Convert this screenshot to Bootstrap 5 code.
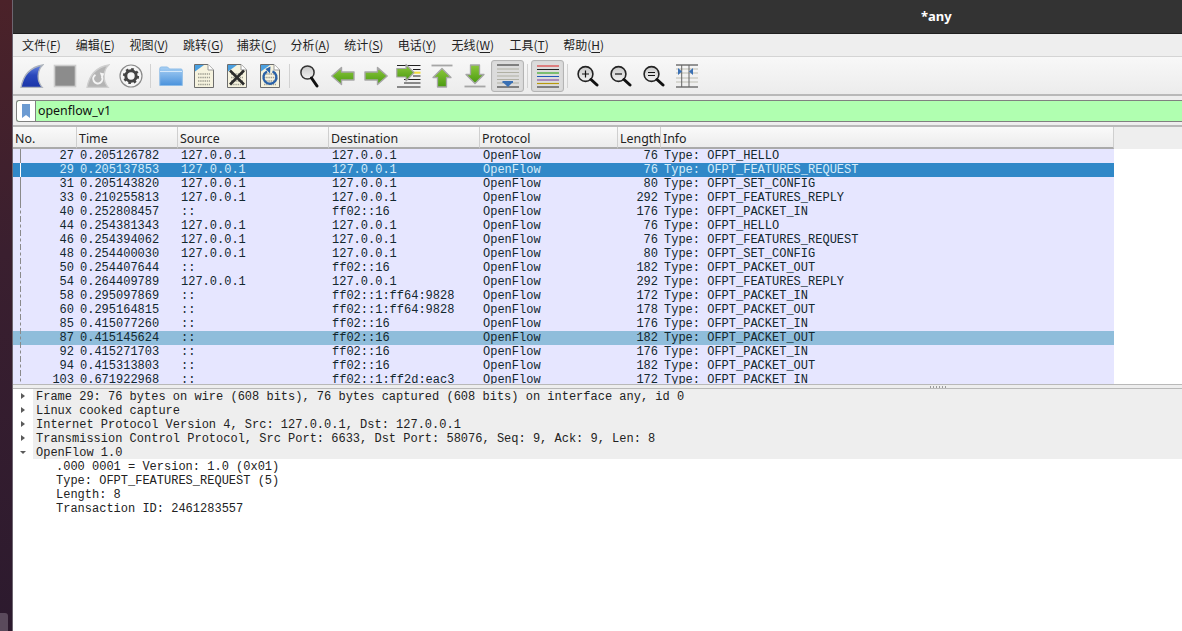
<!DOCTYPE html>
<html lang="zh">
<head>
<meta charset="utf-8">
<title>*any</title>
<link rel="stylesheet" href="https://cdn.jsdelivr.net/npm/bootstrap@5.3.0/dist/css/bootstrap.min.css">
<style>
html,body{height:631px;overflow:hidden}
body{background:#fff;color:#222;font-family:"Noto Sans","Noto Sans CJK SC",sans-serif;font-size:12.4px;line-height:14px}
.dock{width:13px;background:linear-gradient(180deg,#4b2229 0%,#3a1f2f 40%,#2c1a2e 100%);border-right:1px solid #6d6570;flex:none}
.dock-tile{height:18px;width:8px;background:#5a4a5c;border-radius:0 3px 0 0}
.wintitle{height:34px;background:#333;border-bottom:1px solid #1f1f1f;color:#fff;font-weight:700;font-size:13px;font-family:"Noto Sans",sans-serif;padding-left:908px;padding-bottom:2px;flex:none}
.menubar{height:23px;background:#eee;border-bottom:1px solid #d4d4d4;padding-left:9px;flex:none;color:#222;font-family:"Noto Sans CJK SC",sans-serif;font-size:12px}
.menubar span.mi{width:53.7px;flex:none;white-space:nowrap}
.menubar span.mi.wide{width:58px}
.toolbar{height:39px;background:linear-gradient(180deg,#f8f8f8,#ececec);border-bottom:2px solid #b9b9b9;padding-left:2px;flex:none}
.tb{width:33px;height:32px;flex:none;border-radius:3px;border:1px solid transparent}
.tb.on{background:#dcdcdc;border-color:#b4b4b4;box-shadow:inset 0 0 2px #ccc}
.tsep{width:7px;height:24px;flex:none;position:relative}
.tsep::after{content:"";display:block;width:1px;height:24px;margin-left:3px;background:#d2d2d2}
.filterwrap{height:29px;background:#eee;padding:4px 0 3px 3px;flex:none}
.filterbox{height:22px;border:1px solid #808080;border-right:0;border-radius:3px 0 0 3px;background:#b0ffb0;color:#111}
.bmk{width:19px;background:#fff;border-right:1px solid #808080;border-radius:3px 0 0 3px}
.filtertxt{padding-left:2px}
.split1{height:2px;background:#b9b9b9;flex:none}
.plist{height:257px;flex:none;overflow:hidden;position:relative}
.phead{height:22px;background:#eee}
.pcols{width:1101px;flex:none}
.hc{background:linear-gradient(180deg,#fafafa,#ececec);border-bottom:2px solid #aaa;border-right:1px solid #cfcfcf;height:22px;padding:5px 0 0 2px;flex:none;white-space:nowrap;overflow:hidden;color:#222}
.c1{width:64px}.c2{width:101px}.c3{width:151px}.c4{width:151px}.c5{width:138px}.c6{width:43px}.c7{width:453px}
.prow{height:14px;background:#e6e6ff;color:#12272e;font-family:"Liberation Mono",monospace;font-size:12px;line-height:14px;width:1101px}
.prow>div{flex:none;white-space:pre;overflow:hidden;padding-left:3px}
.prow>.c1,.prow>.c6{text-align:right;padding:0 3px 0 0;position:relative}
.prow>.c1::before{content:"";position:absolute;left:7px;top:0;bottom:0;border-left:1px dashed #8a8a8a}
.prow.conv>.c1::before{border-left-style:solid}
.prow.sel>.c1::before{border-left:1px solid #fff}
.prow.sel{background:#3088c8;color:#d6ecf9}
.prow.rel{background:#8fbddb}
.split2{height:5px;background:#eee;border-top:1px solid #b9b9b9;border-bottom:1px solid #b9b9b9;flex:none;position:relative}
.grip{position:absolute;left:916px;top:1px;width:18px;height:2px;background-image:radial-gradient(#9a9a9a 45%,transparent 50%);background-size:3px 2px}
.tree{font-family:"Liberation Mono",monospace;font-size:12px;line-height:16px;color:#222;flex:1 1 auto}
.trow{height:14px;white-space:pre}
.tgl{width:20px;flex:none}
.ttxt{flex:1 1 auto;background:#eee;padding-left:3px}
.kid{padding-left:43px}
.tri-r{width:0;height:0;border-left:4px solid #5a5a5a;border-top:3.5px solid transparent;border-bottom:3.5px solid transparent;margin-left:8px;margin-top:4px}
.tri-d{width:0;height:0;border-top:3px solid #5a5a5a;border-left:3.5px solid transparent;border-right:3.5px solid transparent;margin-left:7px;margin-top:6px}
.hidesvg{position:absolute;width:0;height:0;overflow:hidden}
u{text-underline-offset:2px}
</style>
</head>
<body class="m-0">
<svg class="hidesvg" aria-hidden="true"><defs>
<linearGradient id="gfin" x1="0" y1="0" x2="0" y2="1"><stop offset="0" stop-color="#6c88e0"/><stop offset=".45" stop-color="#2a48bc"/><stop offset="1" stop-color="#1a34a8"/></linearGradient>
<linearGradient id="gfold" x1="0" y1="0" x2="0" y2="1"><stop offset="0" stop-color="#a8d0f4"/><stop offset="1" stop-color="#4a92dc"/></linearGradient>
<linearGradient id="garr" x1="0" y1="0" x2="0" y2="1"><stop offset="0" stop-color="#8cc83c"/><stop offset="1" stop-color="#4a9a10"/></linearGradient>
<linearGradient id="glens" x1="0" y1="0" x2="0" y2="1"><stop offset="0" stop-color="#c8c8c8"/><stop offset="1" stop-color="#f2f2f2"/></linearGradient>
<g id="doc"><path d="M2.5 1.5H16L21.5 7V24.5H2.5Z" fill="#f6f3df" stroke="#6c6c6c"/><path d="M3 2H12L3 8.5Z" fill="#4ba0e0"/><path d="M16 1.5V7H21.5" fill="#fff" stroke="#9a9a9a"/><g stroke="#9e9e92" stroke-width="1.4" stroke-dasharray="1.4 .8" fill="none"><path d="M6 11H18M6 14.5H18M6 18H18M6 21.5H18"/></g></g>
<g id="mag"><circle cx="8.5" cy="9" r="7.4" fill="url(#glens)" stroke="#222" stroke-width="1.6"/><path d="M14 14.5L20 20" stroke="#111" stroke-width="3" stroke-linecap="round"/></g>
<g id="arr"><path d="M.8 12L10.5 3.5V8H23V16H10.5V20.5Z" fill="url(#garr)" stroke="#a6a6a6" stroke-width="1.4" stroke-linejoin="round"/></g>
</defs></svg>
<div class="d-flex" style="height:631px">
<div class="dock d-flex flex-column justify-content-end"><div class="dock-tile"></div></div>
<div class="d-flex flex-column flex-grow-1" style="min-width:0">
<div class="wintitle d-flex align-items-center">*any</div>
<div class="menubar d-flex align-items-center">
<span class="mi">文件(<u>F</u>)</span><span class="mi">编辑(<u>E</u>)</span><span class="mi">视图(<u>V</u>)</span><span class="mi">跳转(<u>G</u>)</span><span class="mi">捕获(<u>C</u>)</span><span class="mi">分析(<u>A</u>)</span><span class="mi">统计(<u>S</u>)</span><span class="mi">电话(<u>Y</u>)</span><span class="mi wide">无线(<u>W</u>)</span><span class="mi">工具(<u>T</u>)</span><span class="mi">帮助(<u>H</u>)</span>
</div>
<div class="toolbar d-flex align-items-center">
<div class="tb d-flex align-items-center justify-content-center"><svg width="24" height="24" viewBox="0 0 24 24"><path d="M1 23.3C3 13 8 3.5 22.7 1C17.5 6 16 16 22.2 23.3Z" fill="url(#gfin)" stroke="#aeb4bd" stroke-width="1.3"/></svg></div>
<div class="tb d-flex align-items-center justify-content-center"><svg width="24" height="24" viewBox="0 0 24 24"><rect x="1.5" y="1.5" width="21" height="21" fill="#8c8c8c" stroke="#cdcdcd" stroke-width="1.6"/></svg></div>
<div class="tb d-flex align-items-center justify-content-center"><svg width="24" height="24" viewBox="0 0 24 24"><path d="M1 23.3C3 13 8 3.5 22.7 1C17.5 6 16 16 22.2 23.3Z" fill="#b4b4b4" stroke="#cfcfcf" stroke-width="1.3"/><path d="M15.8 12.5A4.6 4.6 0 1 1 9.5 10.8" fill="none" stroke="#f4f4f4" stroke-width="2"/><path d="M13.8 8.5L18.2 9.5L16 14.5Z" fill="#f4f4f4"/></svg></div>
<div class="tb d-flex align-items-center justify-content-center"><svg width="24" height="24" viewBox="0 0 24 24"><circle cx="12" cy="12" r="11" fill="#f6f6f6" stroke="#8a8a8a" stroke-width="1.2"/><circle cx="12" cy="12" r="5.2" fill="none" stroke="#444" stroke-width="3"/><circle cx="12" cy="12" r="7" fill="none" stroke="#444" stroke-width="2.2" stroke-dasharray="2.6 2.9"/></svg></div>
<div class="tsep"></div>
<div class="tb d-flex align-items-center justify-content-center"><svg width="24" height="22" viewBox="0 0 24 22"><path d="M.8 3.5Q.8 2 2.3 2H8.5L10.5 4H22Q23.3 4 23.3 5.5V20.5H.8Z" fill="url(#gfold)" stroke="#8ebde8"/><path d="M1 6.5H23" stroke="#d4e8fa"/></svg></div>
<div class="tb d-flex align-items-center justify-content-center"><svg width="24" height="26" viewBox="0 0 24 26"><use href="#doc"/></svg></div>
<div class="tb d-flex align-items-center justify-content-center"><svg width="24" height="26" viewBox="0 0 24 26"><use href="#doc"/><path d="M5 7.5L19 21.5M19 7.5L5 21.5" stroke="#2c2c2c" stroke-width="2.6"/></svg></div>
<div class="tb d-flex align-items-center justify-content-center"><svg width="24" height="26" viewBox="0 0 24 26"><use href="#doc"/><path d="M9 8.5A6.5 6.5 0 1 0 14.5 8.3" fill="none" stroke="#2a62a8" stroke-width="2.4"/><path d="M7.5 6L12.5 3.5L12 10.5Z" fill="#2a62a8"/></svg></div>
<div class="tsep"></div>
<div class="tb d-flex align-items-center justify-content-center"><svg width="22" height="24" viewBox="0 0 22 24"><circle cx="8.5" cy="8.5" r="6.6" fill="url(#glens)" stroke="#333" stroke-width="1.5"/><path d="M12.5 14L18 22" stroke="#111" stroke-width="3" stroke-linecap="round"/></svg></div>
<div class="tb d-flex align-items-center justify-content-center"><svg width="24" height="24" viewBox="0 0 24 24"><use href="#arr"/></svg></div>
<div class="tb d-flex align-items-center justify-content-center"><svg width="24" height="24" viewBox="0 0 24 24"><use href="#arr" transform="matrix(-1 0 0 1 24 0)"/></svg></div>
<div class="tb d-flex align-items-center justify-content-center"><svg width="26" height="26" viewBox="0 0 26 26"><path d="M1 2.5H24.5M1 24H24.5M8 20H24.5M8 16.5H24.5M17 6.5H24.5M17 13H24.5" stroke="#222" stroke-width="1"/><path d="M17 9.7H24.5" stroke="#f2dc3a" stroke-width="2"/><path d="M18 9.5L10 1.5V5.5H.8V14H10V18Z" fill="url(#garr)" stroke="#a6a6a6" stroke-width="1.2" stroke-linejoin="round"/></svg></div>
<div class="tb d-flex align-items-center justify-content-center"><svg width="24" height="24" viewBox="0 0 24 24"><path d="M1.5 1.5H22.5" stroke="#a6a6a6" stroke-width="1.8"/><path d="M12 4.5L21 13.5H16.5V23H7.5V13.5H3Z" fill="url(#garr)" stroke="#a6a6a6" stroke-width="1.3" stroke-linejoin="round"/></svg></div>
<div class="tb d-flex align-items-center justify-content-center"><svg width="24" height="24" viewBox="0 0 24 24"><path d="M1.5 22.5H22.5" stroke="#a6a6a6" stroke-width="1.8"/><path d="M12 19.5L21 10.5H16.5V1H7.5V10.5H3Z" fill="url(#garr)" stroke="#a6a6a6" stroke-width="1.3" stroke-linejoin="round"/></svg></div>
<div class="tb on d-flex align-items-center justify-content-center"><svg width="24" height="24" viewBox="0 0 24 24"><path d="M1 1H23M1 23H23" stroke="#222" stroke-width="1"/><path d="M1 5H23M1 8.5H23M1 12H23M1 15.5H23M1 19H23" stroke="#b0b0a4" stroke-width="1"/><path d="M6.5 18H17L12 23Z" fill="#3a70b4"/><path d="M6.5 18H17" stroke="#3a70b4" stroke-width="2"/></svg></div>
<div class="tsep"></div>
<div class="tb on d-flex align-items-center justify-content-center"><svg width="24" height="24" viewBox="0 0 24 24"><path d="M1 2H23" stroke="#e02020"/><path d="M1 5.5H23" stroke="#222"/><path d="M1 9H23" stroke="#3aa828" stroke-width="1.2"/><path d="M1 12.5H23" stroke="#2058b8"/><path d="M1 16H23" stroke="#7a3a9a"/><path d="M1 19.5H23" stroke="#b8980c" stroke-width="1.2"/><path d="M1 23H23" stroke="#222"/></svg></div>
<div class="tsep"></div>
<div class="tb d-flex align-items-center justify-content-center"><svg width="22" height="22" viewBox="0 0 22 22"><use href="#mag"/><path d="M5 9H12M8.5 5.5V12.5" stroke="#111" stroke-width="1.2"/></svg></div>
<div class="tb d-flex align-items-center justify-content-center"><svg width="22" height="22" viewBox="0 0 22 22"><use href="#mag"/><path d="M5 9H12" stroke="#111" stroke-width="1.2"/></svg></div>
<div class="tb d-flex align-items-center justify-content-center"><svg width="22" height="22" viewBox="0 0 22 22"><use href="#mag"/><path d="M5 7.5H12M5 10.5H12" stroke="#111" stroke-width="1.2"/></svg></div>
<div class="tb d-flex align-items-center justify-content-center"><svg width="24" height="24" viewBox="0 0 24 24"><path d="M1 1H23M1 23H23" stroke="#333"/><path d="M1 5H23M1 9H23M1 14H23M1 18H23" stroke="#bdbdb2"/><path d="M6.7 1V23M14 1V23" stroke="#666"/><path d="M3 4L7 7.5L3 11ZM18 4L14 7.5L18 11Z" fill="#3a70b4"/></svg></div>
</div>
<div class="filterwrap"><div class="filterbox d-flex align-items-stretch">
<div class="bmk d-flex align-items-center justify-content-center"><svg width="10" height="16" viewBox="0 0 10 16"><path d="M1 1H9V15L5 12L1 15Z" fill="#6c9bd2"/></svg></div>
<div class="filtertxt d-flex align-items-center">openflow_v1</div>
</div></div>
<div class="split1"></div>
<div class="plist">
<div class="phead d-flex"><div class="pcols d-flex">
<div class="hc c1">No.</div><div class="hc c2">Time</div><div class="hc c3">Source</div><div class="hc c4">Destination</div><div class="hc c5">Protocol</div><div class="hc c6">Length</div><div class="hc c7">Info</div>
</div></div>
<div class="prow conv d-flex"><div class="c1">27</div><div class="c2">0.205126782</div><div class="c3">127.0.0.1</div><div class="c4">127.0.0.1</div><div class="c5">OpenFlow</div><div class="c6">76</div><div class="c7">Type: OFPT_HELLO</div></div>
<div class="prow sel d-flex"><div class="c1">29</div><div class="c2">0.205137853</div><div class="c3">127.0.0.1</div><div class="c4">127.0.0.1</div><div class="c5">OpenFlow</div><div class="c6">76</div><div class="c7">Type: OFPT_FEATURES_REQUEST</div></div>
<div class="prow conv d-flex"><div class="c1">31</div><div class="c2">0.205143820</div><div class="c3">127.0.0.1</div><div class="c4">127.0.0.1</div><div class="c5">OpenFlow</div><div class="c6">80</div><div class="c7">Type: OFPT_SET_CONFIG</div></div>
<div class="prow conv d-flex"><div class="c1">33</div><div class="c2">0.210255813</div><div class="c3">127.0.0.1</div><div class="c4">127.0.0.1</div><div class="c5">OpenFlow</div><div class="c6">292</div><div class="c7">Type: OFPT_FEATURES_REPLY</div></div>
<div class="prow d-flex"><div class="c1">40</div><div class="c2">0.252808457</div><div class="c3">::</div><div class="c4">ff02::16</div><div class="c5">OpenFlow</div><div class="c6">176</div><div class="c7">Type: OFPT_PACKET_IN</div></div>
<div class="prow d-flex"><div class="c1">44</div><div class="c2">0.254381343</div><div class="c3">127.0.0.1</div><div class="c4">127.0.0.1</div><div class="c5">OpenFlow</div><div class="c6">76</div><div class="c7">Type: OFPT_HELLO</div></div>
<div class="prow d-flex"><div class="c1">46</div><div class="c2">0.254394062</div><div class="c3">127.0.0.1</div><div class="c4">127.0.0.1</div><div class="c5">OpenFlow</div><div class="c6">76</div><div class="c7">Type: OFPT_FEATURES_REQUEST</div></div>
<div class="prow d-flex"><div class="c1">48</div><div class="c2">0.254400030</div><div class="c3">127.0.0.1</div><div class="c4">127.0.0.1</div><div class="c5">OpenFlow</div><div class="c6">80</div><div class="c7">Type: OFPT_SET_CONFIG</div></div>
<div class="prow d-flex"><div class="c1">50</div><div class="c2">0.254407644</div><div class="c3">::</div><div class="c4">ff02::16</div><div class="c5">OpenFlow</div><div class="c6">182</div><div class="c7">Type: OFPT_PACKET_OUT</div></div>
<div class="prow d-flex"><div class="c1">54</div><div class="c2">0.264409789</div><div class="c3">127.0.0.1</div><div class="c4">127.0.0.1</div><div class="c5">OpenFlow</div><div class="c6">292</div><div class="c7">Type: OFPT_FEATURES_REPLY</div></div>
<div class="prow d-flex"><div class="c1">58</div><div class="c2">0.295097869</div><div class="c3">::</div><div class="c4">ff02::1:ff64:9828</div><div class="c5">OpenFlow</div><div class="c6">172</div><div class="c7">Type: OFPT_PACKET_IN</div></div>
<div class="prow d-flex"><div class="c1">60</div><div class="c2">0.295164815</div><div class="c3">::</div><div class="c4">ff02::1:ff64:9828</div><div class="c5">OpenFlow</div><div class="c6">178</div><div class="c7">Type: OFPT_PACKET_OUT</div></div>
<div class="prow d-flex"><div class="c1">85</div><div class="c2">0.415077260</div><div class="c3">::</div><div class="c4">ff02::16</div><div class="c5">OpenFlow</div><div class="c6">176</div><div class="c7">Type: OFPT_PACKET_IN</div></div>
<div class="prow rel d-flex"><div class="c1">87</div><div class="c2">0.415145624</div><div class="c3">::</div><div class="c4">ff02::16</div><div class="c5">OpenFlow</div><div class="c6">182</div><div class="c7">Type: OFPT_PACKET_OUT</div></div>
<div class="prow d-flex"><div class="c1">92</div><div class="c2">0.415271703</div><div class="c3">::</div><div class="c4">ff02::16</div><div class="c5">OpenFlow</div><div class="c6">176</div><div class="c7">Type: OFPT_PACKET_IN</div></div>
<div class="prow d-flex"><div class="c1">94</div><div class="c2">0.415313803</div><div class="c3">::</div><div class="c4">ff02::16</div><div class="c5">OpenFlow</div><div class="c6">182</div><div class="c7">Type: OFPT_PACKET_OUT</div></div>
<div class="prow d-flex"><div class="c1">103</div><div class="c2">0.671922968</div><div class="c3">::</div><div class="c4">ff02::1:ff2d:eac3</div><div class="c5">OpenFlow</div><div class="c6">172</div><div class="c7">Type: OFPT_PACKET_IN</div></div>
</div>
<div class="split2"><div class="grip"></div></div>
<div class="tree">
<div class="trow d-flex"><div class="tgl"><div class="tri-r"></div></div><div class="ttxt">Frame 29: 76 bytes on wire (608 bits), 76 bytes captured (608 bits) on interface any, id 0</div></div>
<div class="trow d-flex"><div class="tgl"><div class="tri-r"></div></div><div class="ttxt">Linux cooked capture</div></div>
<div class="trow d-flex"><div class="tgl"><div class="tri-r"></div></div><div class="ttxt">Internet Protocol Version 4, Src: 127.0.0.1, Dst: 127.0.0.1</div></div>
<div class="trow d-flex"><div class="tgl"><div class="tri-r"></div></div><div class="ttxt">Transmission Control Protocol, Src Port: 6633, Dst Port: 58076, Seq: 9, Ack: 9, Len: 8</div></div>
<div class="trow d-flex"><div class="tgl"><div class="tri-d"></div></div><div class="ttxt">OpenFlow 1.0</div></div>
<div class="trow kid">.000 0001 = Version: 1.0 (0x01)</div>
<div class="trow kid">Type: OFPT_FEATURES_REQUEST (5)</div>
<div class="trow kid">Length: 8</div>
<div class="trow kid">Transaction ID: 2461283557</div>
</div>
</div>
</div>
<script src="https://cdn.jsdelivr.net/npm/bootstrap@5.3.0/dist/js/bootstrap.bundle.min.js"></script>
</body>
</html>
